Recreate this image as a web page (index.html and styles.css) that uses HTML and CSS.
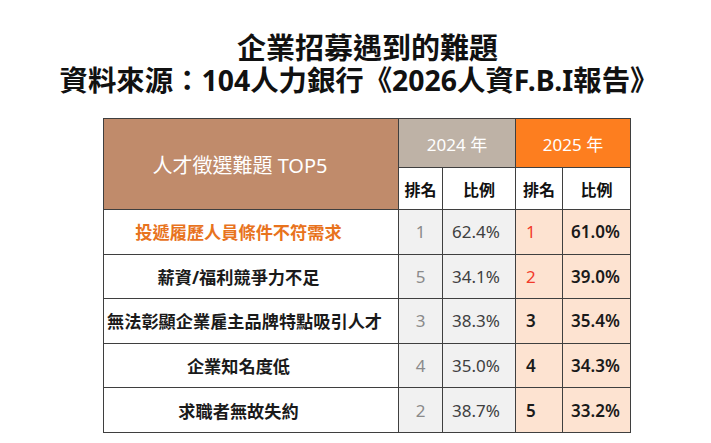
FILE: index.html
```html
<!DOCTYPE html>
<html lang="zh-Hant">
<head>
<meta charset="utf-8">
<title>企業招募遇到的難題</title>
<link rel="stylesheet" href="styles.css">
</head>
<body>
<div class="page">
  <header class="title">
    <h1 class="title-line title-main">企業招募遇到的難題</h1>
    <p class="title-line title-source">資料來源：104人力銀行《2026人資F.B.I報告》</p>
  </header>
  <table class="survey">
    <colgroup>
      <col class="c-item">
      <col class="c-rank24">
      <col class="c-pct24">
      <col class="c-rank25">
      <col class="c-pct25">
    </colgroup>
    <thead>
      <tr class="head-year">
        <th rowspan="2" class="h-item">人才徵選難題 TOP5</th>
        <th colspan="2" class="h-2024">2024 年</th>
        <th colspan="2" class="h-2025">2025 年</th>
      </tr>
      <tr class="head-sub">
        <th class="h-sub">排名</th>
        <th class="h-sub">比例</th>
        <th class="h-sub">排名</th>
        <th class="h-sub">比例</th>
      </tr>
    </thead>
    <tbody>
      <tr class="row r1">
        <td class="item item-hl">投遞履歷人員條件不符需求</td>
        <td class="rank24">1</td>
        <td class="pct24">62.4%</td>
        <td class="rank25 up">1</td>
        <td class="pct25">61.0%</td>
      </tr>
      <tr class="row r2">
        <td class="item">薪資/福利競爭力不足</td>
        <td class="rank24">5</td>
        <td class="pct24">34.1%</td>
        <td class="rank25 up">2</td>
        <td class="pct25">39.0%</td>
      </tr>
      <tr class="row r3">
        <td class="item">無法彰顯企業雇主品牌特點吸引人才</td>
        <td class="rank24">3</td>
        <td class="pct24">38.3%</td>
        <td class="rank25">3</td>
        <td class="pct25">35.4%</td>
      </tr>
      <tr class="row r4">
        <td class="item">企業知名度低</td>
        <td class="rank24">4</td>
        <td class="pct24">35.0%</td>
        <td class="rank25">4</td>
        <td class="pct25">34.3%</td>
      </tr>
      <tr class="row r5">
        <td class="item">求職者無故失約</td>
        <td class="rank24">2</td>
        <td class="pct24">38.7%</td>
        <td class="rank25">5</td>
        <td class="pct25">33.2%</td>
      </tr>
    </tbody>
  </table>
</div>
</body>
</html>
```

FILE: styles.css
```css
html, body {
  margin: 0;
  padding: 0;
  background: #ffffff;
}

body {
  width: 711px;
  height: 443px;
  overflow: hidden;
  font-family: "Noto Sans", "Noto Sans CJK TC", sans-serif;
  color: #1a1a1a;
}

.page {
  display: flex;
  flex-direction: column;
  padding-top: 32px;
}

.title {
  display: flex;
  flex-direction: column;
  align-items: center;
  padding-left: 7px;
  margin-bottom: 22px;
}

.title-line {
  margin: 0;
  font-size: 29px;
  line-height: 32px;
  font-weight: 700;
  color: #111111;
  white-space: nowrap;
}

.title-main {
  padding-left: 17px;
}

.title-source {
  font-size: 28.4px;
}

.survey {
  margin-left: 103px;
  width: 527px;
  table-layout: fixed;
  border-collapse: collapse;
  border-spacing: 0;
}

.c-item { width: 295px; }
.c-rank24 { width: 44px; }
.c-pct24 { width: 73px; }
.c-rank25 { width: 47px; }
.c-pct25 { width: 68px; }

.survey th,
.survey td {
  padding: 0;
  border: 1px solid #3f3f3f;
  white-space: nowrap;
}

.head-year { height: 49px; }
.head-sub { height: 42px; }

.h-item {
  background: #c08b6b;
  color: #ffffff;
  font-weight: 400;
  font-size: 20px;
  text-align: center;
  padding: 0 26px 0 4px !important;
  border-left-color: #8c8c8c;
}

.h-2024 {
  background: #beb2a6;
  color: #ffffff;
  font-weight: 400;
  font-size: 17px;
  text-align: center;
}

.h-2025 {
  background: #fd7e1f;
  color: #ffffff;
  font-weight: 400;
  font-size: 17px;
  text-align: center;
}

.h-sub {
  background: #ffffff;
  color: #111111;
  font-weight: 700;
  font-size: 16px;
  text-align: center;
}

.row { height: 44.6px; }

.item {
  text-align: center;
  font-weight: 700;
  font-size: 17.2px;
  color: #1a1a1a;
  padding: 0 28px 0 3px !important;
  border-left-color: #8c8c8c;
}

.item-hl { color: #e8731d; }

.rank24 {
  background: #f1f1f1;
  color: #8a8a8a;
  font-size: 17px;
  text-align: center;
}

.pct24 {
  background: #f1f1f1;
  color: #404040;
  font-size: 17px;
  text-align: left;
  padding-left: 9px !important;
}

.rank25 {
  background: #fde3d1;
  color: #1a1a1a;
  font-weight: 600;
  font-size: 17px;
  text-align: left;
  padding-left: 10px !important;
}

.rank25.up {
  color: #f23a2a;
  font-weight: 400;
}

.pct25 {
  background: #fde3d1;
  color: #1a1a1a;
  font-weight: 600;
  font-size: 17px;
  text-align: left;
  padding-left: 8px !important;
}
```
